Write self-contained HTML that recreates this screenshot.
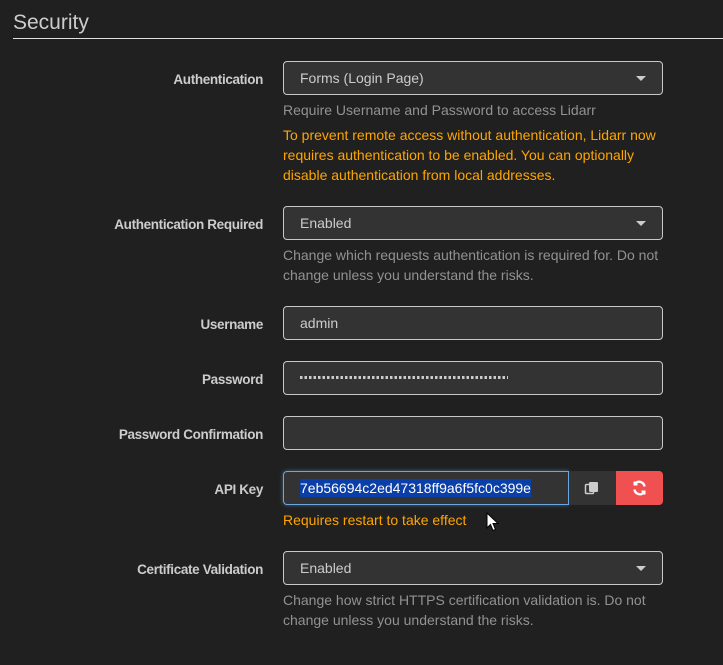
<!DOCTYPE html>
<html><head><meta charset="utf-8"><style>
*{box-sizing:border-box;margin:0;padding:0}
body{width:723px;height:665px;background:#202020;font-family:"Liberation Sans",sans-serif;font-size:14px;color:#ccc;position:relative;overflow:hidden}
.title{position:absolute;left:13px;top:11px;font-size:21px;color:#ccc}
.rule{position:absolute;left:13px;top:38px;width:710px;height:1px;background:#e0e0e0}
.lbl{position:absolute;right:460px;font-weight:bold;font-size:13.5px;letter-spacing:-0.35px;color:#ccc;white-space:nowrap}
.inp{position:absolute;left:283px;width:380px;height:34px;background:#333;border:1px solid #c8c8c8;border-radius:4px;padding:0 16px;line-height:32px;color:#ccc}
.caret{position:absolute;right:16px;top:14px;width:0;height:0;border-left:5px solid transparent;border-right:5px solid transparent;border-top:5px solid #ccc}
.help{position:absolute;left:283px;color:#909293;line-height:20px;width:390px}
.warn{position:absolute;left:283px;color:#ffa500;line-height:20px;width:390px}
</style></head><body>
<div class="title">Security</div><div class="rule"></div>

<div class="lbl" style="top:72px">Authentication</div>
<div class="inp" style="top:61px">Forms (Login Page)<div class="caret"></div></div>
<div class="help" style="top:100px">Require Username and Password to access Lidarr</div>
<div class="warn" style="top:125px">To prevent remote access without authentication, Lidarr now requires authentication to be enabled. You can optionally disable authentication from local addresses.</div>

<div class="lbl" style="top:217px">Authentication Required</div>
<div class="inp" style="top:206px">Enabled<div class="caret"></div></div>
<div class="help" style="top:245px">Change which requests authentication is required for. Do not change unless you understand the risks.</div>

<div class="lbl" style="top:317px">Username</div>
<div class="inp" style="top:306px">admin</div>

<div class="lbl" style="top:372px">Password</div>
<div class="inp" style="top:361px"><div style="position:absolute;left:16px;top:14px;width:208px;height:3px;background:repeating-linear-gradient(90deg,#ccc 0 2.5px,transparent 2.5px 4.5px)"></div></div>

<div class="lbl" style="top:427px">Password Confirmation</div>
<div class="inp" style="top:416px"></div>

<div class="lbl" style="top:482px">API Key</div>
<div class="inp" style="top:471px;width:286px;border-color:#6aa7de;border-radius:4px 0 0 4px;box-shadow:0 0 4px rgba(102,175,233,.5)"><span style="background:#0a3ea8;color:#fff;padding:1px 0">7eb56694c2ed47318ff9a6f5fc0c399e</span></div>
<div style="position:absolute;left:569px;top:471px;width:47px;height:34px;background:#333">
<svg width="47" height="34"><rect x="20" y="11" width="9" height="10" rx="1.5" fill="#ccc"/><rect x="16.5" y="13.5" width="8" height="9" rx="1" fill="#333" stroke="#ccc" stroke-width="1.5"/><rect x="20" y="11" width="9" height="10" rx="1.5" fill="#ccc"/></svg></div>
<div style="position:absolute;left:616px;top:471px;width:47px;height:34px;background:#f05050;border-radius:0 4px 4px 0">
<svg width="47" height="34" fill="none" stroke="#fff" stroke-width="2.4"><path d="M28.5 15.5a5.5 5.5 0 0 0-9.5-3"/><path d="M18.5 18.5a5.5 5.5 0 0 0 9.5 3"/><path d="M18.5 10.5v3h3" stroke-width="2"/><path d="M28.5 23.5v-3h-3" stroke-width="2"/></svg></div>
<div class="warn" style="top:510px">Requires restart to take effect</div>
<svg style="position:absolute;left:486px;top:512px" width="14" height="20"><path d="M1 1v15l3.5-3.5 2.5 6 2.5-1-2.5-6h5z" fill="#fff" stroke="#000" stroke-width="1"/></svg>

<div class="lbl" style="top:562px">Certificate Validation</div>
<div class="inp" style="top:551px">Enabled<div class="caret"></div></div>
<div class="help" style="top:590px">Change how strict HTTPS certification validation is. Do not change unless you understand the risks.</div>
</body></html>
